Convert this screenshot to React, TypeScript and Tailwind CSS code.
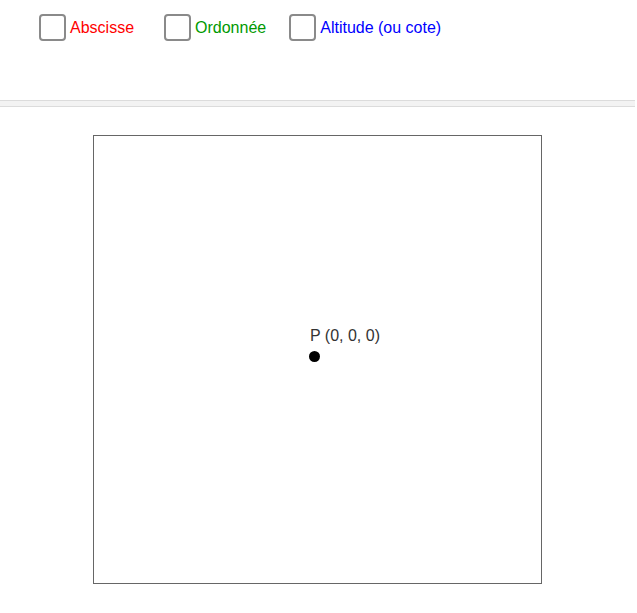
import React from "react";

function Check({ label, color, className }: { label: string; color: string; className?: string }) {
  return (
    <label className={"flex items-center gap-[4px] " + (className ?? "")}>
      <span className="block w-[27px] h-[27px] rounded-[4px] border-[2px] border-[#8a8a8a] bg-white box-border" />
      <span className={"text-[16px] leading-[16px] mt-[1px] " + color}>{label}</span>
    </label>
  );
}

export default function App() {
  return (
    <div className="w-[637px] h-[613px] bg-white relative overflow-hidden" style={{ fontFamily: '"Liberation Sans", Arial, sans-serif' }}>
      <div className="h-[100px] pt-[14px] pl-[39px] flex items-start">
        <Check label="Abscisse" color="text-[#ff0000]" />
        <Check label="Ordonnée" color="text-[#009900]" className="ml-[30px]" />
        <Check label="Altitude (ou cote)" color="text-[#0000ff]" className="ml-[23px]" />
      </div>
      <div className="w-[635px] h-[7px] bg-[#f3f3f3] border-y border-[#dcdcdc] box-border" />
      <div className="pt-[28px] pl-[93px]">
        <div className="relative w-[449px] h-[449px] border border-[#666666] box-border">
          <div className="absolute left-[216px] top-[192px] text-[16px] leading-[16px] text-[#333333] whitespace-nowrap">
            P (0, 0, 0)
          </div>
          <div className="absolute left-[215px] top-[215px] w-[11px] h-[11px] rounded-full bg-black" />
        </div>
      </div>
    </div>
  );
}
